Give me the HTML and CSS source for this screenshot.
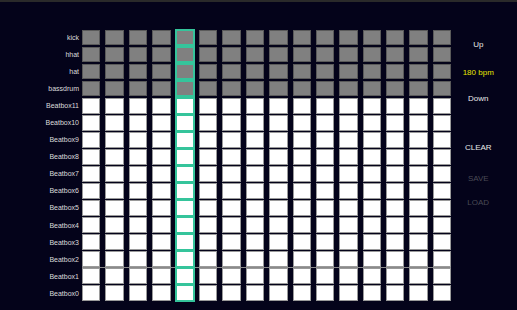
FILE: index.html
```html
<!DOCTYPE html>
<html lang="en">
<head>
  <meta charset="UTF-8" />
  <meta name="viewport" content="width=device-width, initial-scale=1.0"/>
  <title>Beat Sequencer</title>
  <link rel="stylesheet" href="styles.css">
</head>
<body>

  <div class="board" id="board"></div>

  <div class="controls">
    <div class="ctl up">Up</div>
    <div class="ctl bpm">180 bpm</div>
    <div class="ctl down">Down</div>
    <div class="ctl clear">CLEAR</div>
    <div class="ctl save off">SAVE</div>
    <div class="ctl load off">LOAD</div>
  </div>

  <script>
    const tracks = ['kick', 'hhat', 'hat', 'bassdrum'];
    for (let i = 11; i >= 0; i--) tracks.push('Beatbox' + i);

    const steps = 16;
    const playhead = 4;
    const board = document.getElementById('board');

    tracks.forEach((name, r) => {
      const row = document.createElement('div');
      row.className = 'row';
      if (name === 'Beatbox1') row.classList.add('split');

      const label = document.createElement('div');
      label.className = 'label';
      label.textContent = name;
      row.appendChild(label);

      const cells = document.createElement('div');
      cells.className = 'cells';
      for (let s = 0; s < steps; s++) {
        const cell = document.createElement('div');
        cell.className = 'cell ' + (r < 4 ? 'drum' : 'synth');
        if (s === playhead) cell.classList.add('now');
        cells.appendChild(cell);
      }
      row.appendChild(cells);
      board.appendChild(row);
    });
  </script>

</body>
</html>
```

FILE: styles.css
```css
body {
  margin: 0;
  height: 308px;
  overflow: hidden;
  background-color: #04031a;
  border-top: 2px solid #2a2a2a;
  font-family: 'Liberation Sans', Arial, sans-serif;
  color: #e8e8e8;
  display: flex;
}
.board {
  padding-top: 27px;
}
.row {
  display: flex;
  align-items: center;
  height: 17.05px;
}
.label {
  width: 79px;
  padding-right: 3px;
  text-align: right;
  font-size: 7px;
  color: #dcdcdc;
}
.cells {
  display: flex;
  gap: 5px;
  height: 100%;
  align-items: center;
}
.row.split .cells {
  box-shadow: 0 -1px 0 0 #8a8a8a;
}
.cell {
  box-sizing: border-box;
  width: 18.4px;
  height: 15.6px;
}
.cell.drum {
  background-color: #808080;
  border: 1px solid #5a5a5a;
}
.cell.synth {
  background-color: #fff;
  border: 1px solid #9a9a9a;
}
.cell.now {
  border-color: #35c49b;
  outline: 1px solid #35c49b;
}
.controls {
  width: 54px;
  display: flex;
  flex-direction: column;
  align-items: center;
  padding-top: 38px;
  font-size: 8px;
  line-height: 10px;
}
.ctl {
  white-space: nowrap;
}
.bpm {
  color: #e6e600;
  margin-top: 17.5px;
}
.down {
  margin-top: 16.5px;
}
.clear {
  margin-top: 39px;
}
.save {
  margin-top: 21px;
}
.load {
  margin-top: 14px;
}
.off {
  color: #4a4a55;
}
```
